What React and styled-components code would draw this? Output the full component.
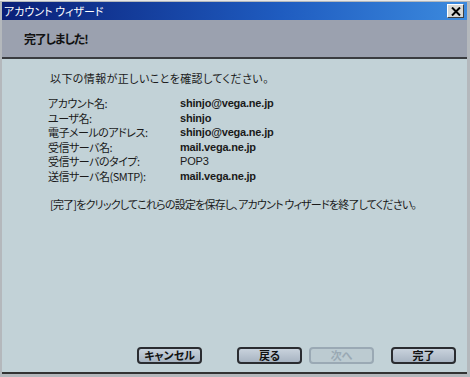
import React from 'react';
import styled, { createGlobalStyle } from 'styled-components';

const GlobalStyle = createGlobalStyle`
  html, body {
    margin: 0;
    padding: 0;
    background: #ffffff;
  }
  body {
    font-family: "Noto Sans CJK JP", "Liberation Sans", sans-serif;
  }
`;

const rows = [
  { label: 'アカウント名:', value: 'shinjo@vega.ne.jp', bold: true },
  { label: 'ユーザ名:', value: 'shinjo', bold: true },
  { label: '電子メールのアドレス:', value: 'shinjo@vega.ne.jp', bold: true },
  { label: '受信サーバ名:', value: 'mail.vega.ne.jp', bold: true },
  { label: '受信サーバのタイプ:', value: 'POP3', bold: false },
  { label: '送信サーバ名(SMTP):', value: 'mail.vega.ne.jp', bold: true },
];

const App = () => (
  <>
    <GlobalStyle />
    <Window>
      <TitleBar>
        <Title>アカウント ウィザード</Title>
        <CloseButton>
          <svg width="10" height="9" viewBox="0 0 10 9">
            <path d="M1 0.5 L9 8.5 M9 0.5 L1 8.5" stroke="#000" strokeWidth="2" />
          </svg>
        </CloseButton>
      </TitleBar>
      <Header>
        <HeaderTitle>完了しました!</HeaderTitle>
      </Header>
      <Body>
        <Intro>以下の情報が正しいことを確認してください。</Intro>
        <InfoList>
          {rows.map((row) => (
            <InfoRow key={row.label}>
              <Label>{row.label}</Label>
              <Value $bold={row.bold}>{row.value}</Value>
            </InfoRow>
          ))}
        </InfoList>
        <Outro>[完了]をクリックしてこれらの設定を保存し、アカウント ウィザードを終了してください。</Outro>
        <Spacer />
        <ButtonRow>
          <Button>キャンセル</Button>
          <Button $gap={35}>戻る</Button>
          <Button $gap={7} disabled>次へ</Button>
          <Button $gap={17}>完了</Button>
        </ButtonRow>
      </Body>
    </Window>
  </>
);

const Window = styled.div`
  width: 470px;
  height: 377px;
  box-sizing: border-box;
  display: flex;
  flex-direction: column;
  background: #b4b8bc;
  border-top: 1px solid #e8e8e8;
  padding: 1px 3px 3px 2px;
`;

const TitleBar = styled.div`
  height: 18px;
  display: flex;
  align-items: center;
  justify-content: space-between;
  padding: 0 3px 0 2px;
  background: linear-gradient(to right, #0a1f78 0%, #1f5cc0 60%, #3c8ade 100%);
`;

const Title = styled.span`
  color: #ffffff;
  font-size: 11px;
  line-height: 1;
  font-feature-settings: "palt";
`;

const CloseButton = styled.div`
  width: 15px;
  height: 12px;
  display: flex;
  align-items: center;
  justify-content: center;
  background: #d8d8d4;
  border: 1px solid;
  border-color: #ffffff #404040 #404040 #ffffff;
`;

const Header = styled.div`
  height: 37px;
  display: flex;
  align-items: center;
  padding-left: 22px;
  background: #9ba1af;
  border-bottom: 2px solid #3a3c40;
`;

const HeaderTitle = styled.h1`
  margin: 0;
  font-size: 12px;
  font-weight: bold;
  color: #111111;
  letter-spacing: -1.2px;
  font-feature-settings: "palt";
`;

const Body = styled.div`
  flex: 1;
  display: flex;
  flex-direction: column;
  background: #c2d2d7;
  padding: 11px 0 0 46px;
  border-bottom: 2px solid #333333;
  font-size: 11px;
  color: #1a1a1a;
  font-feature-settings: "palt";
`;

const Intro = styled.p`
  margin: 0 0 10px 2px;
  line-height: 16px;
  letter-spacing: 0.4px;
`;

const InfoList = styled.div`
  display: flex;
  flex-direction: column;
`;

const InfoRow = styled.div`
  display: flex;
  align-items: center;
  height: 14.5px;
`;

const Label = styled.span`
  width: 132px;
  flex: none;
  line-height: 14px;
  letter-spacing: -0.5px;
`;

const Value = styled.span`
  font-family: "Liberation Sans", Arial, sans-serif;
  font-size: 11px;
  font-weight: ${(p) => (p.$bold ? 'bold' : 'normal')};
  line-height: 14px;
  letter-spacing: -0.2px;
`;

const Outro = styled.p`
  margin: 13px 0 0 2px;
  line-height: 16px;
  white-space: nowrap;
  letter-spacing: -0.8px;
`;

const Spacer = styled.div`
  flex: 1;
`;

const ButtonRow = styled.div`
  display: flex;
  align-items: center;
  padding: 0 0 8px 89px;
`;

const Button = styled.button`
  width: 65px;
  height: 17px;
  margin-left: ${(p) => p.$gap || 0}px;
  box-sizing: border-box;
  padding: 0;
  border: 2px solid ${(p) => (p.disabled ? '#9aa9b4' : '#2a2c30')};
  border-radius: 4px;
  background: ${(p) =>
    p.disabled
      ? '#bccbd1'
      : 'linear-gradient(to bottom, #c8d2dc 0%, #a8b4c2 100%)'};
  color: ${(p) => (p.disabled ? '#9aa9b4' : '#111111')};
  font-family: "Noto Sans CJK JP", sans-serif;
  font-size: 11px;
  font-weight: bold;
  line-height: 1;
  font-feature-settings: "palt";
`;

export default App;
